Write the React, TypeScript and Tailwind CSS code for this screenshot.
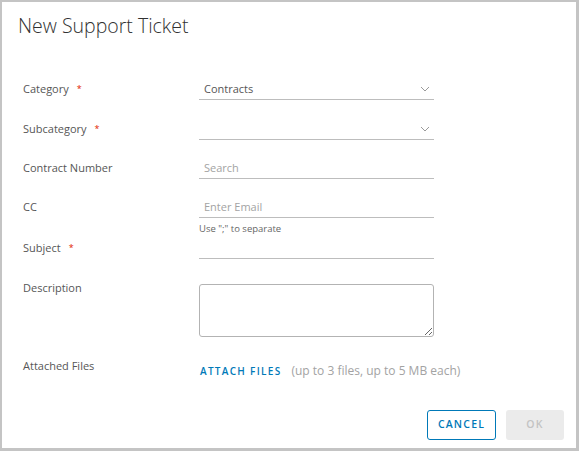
import React from 'react';

const Chevron = () => (
  <svg width="10" height="6" viewBox="0 0 10 6" className="shrink-0 text-[#9a9a9a]">
    <path d="M1 1l4 4 4-4" fill="none" stroke="currentColor" strokeWidth="1" />
  </svg>
);

const Label = ({ text, required }: { text: string; required?: boolean }) => (
  <div className="w-[176px] shrink-0 text-[11px] leading-[20px] text-[#565656]">
    {text}
    {required && <span className="ml-[8px] text-[9px] align-top text-[#e12200]">*</span>}
  </div>
);

export default function App() {
  return (
    <div
      className="w-[579px] h-[451px] bg-white border-l-2 border-t-2 border-r-[3px] border-b-[3px] border-[#c4c4c4] flex flex-col"
      style={{ fontFamily: '"Open Sans", "Liberation Sans", sans-serif' }}
    >
      {/* Header */}
      <h1 className="pt-[10px] pl-[16px] text-[19.5px] leading-[28px] font-light text-[#313131]">
        New Support Ticket
      </h1>

      {/* Form */}
      <div className="pl-[21px] flex flex-col">
        <div className="mt-[39px] flex">
          <Label text="Category" required />
          <div className="w-[235px] h-[21px] border-b border-[#bdbdbd] flex items-center justify-between pl-[5px] pr-[4px]">
            <span className="text-[11px] leading-[20px] text-[#565656]">Contracts</span>
            <Chevron />
          </div>
        </div>

        <div className="mt-[19px] flex">
          <Label text="Subcategory" required />
          <div className="w-[235px] h-[21px] border-b border-[#bdbdbd] flex items-center justify-end pr-[4px]">
            <Chevron />
          </div>
        </div>

        <div className="mt-[18px] flex">
          <Label text="Contract Number" />
          <div className="w-[235px] h-[21px] border-b border-[#bdbdbd] flex items-center pl-[5px]">
            <span className="text-[11px] leading-[20px] text-[#a3a3a3]">Search</span>
          </div>
        </div>

        <div className="mt-[18px] flex">
          <Label text="CC" />
          <div className="flex flex-col">
            <div className="w-[235px] h-[21px] border-b border-[#bdbdbd] flex items-center pl-[5px]">
              <span className="text-[11px] leading-[20px] text-[#a3a3a3]">Enter Email</span>
            </div>
            <div className="mt-[5px] text-[9.5px] leading-[12px] text-[#666666]">Use ";" to separate</div>
          </div>
        </div>

        <div className="mt-[3px] flex">
          <Label text="Subject" required />
          <div className="w-[235px] h-[21px] border-b border-[#bdbdbd]" />
        </div>

        <div className="mt-[19px] flex">
          <Label text="Description" />
          <textarea className="mt-[6px] w-[235px] h-[53px] border border-[#b3b3b3] rounded-[3px] resize outline-none" />
        </div>

        <div className="mt-[19px] flex">
          <Label text="Attached Files" />
          <div className="mt-[5px] flex items-center leading-[20px]">
            <span className="pl-[1px] text-[10px] font-semibold tracking-[1.3px] text-[#0079b8]">ATTACH FILES</span>
            <span className="ml-[10px] text-[12px] text-[#a3a3a3]">(up to 3 files, up to 5 MB each)</span>
          </div>
        </div>
      </div>

      {/* Footer */}
      <div className="mt-[29px] pr-[12px] flex justify-end gap-[10px]">
        <button className="w-[69px] h-[30px] border border-[#0079b8] rounded-[3px] text-[10.5px] font-semibold tracking-[1.2px] text-[#0079b8]">
          CANCEL
        </button>
        <button className="w-[58px] h-[30px] bg-[#ebebeb] rounded-[3px] text-[10.5px] font-semibold tracking-[1.2px] text-[#c3c3c3]">
          OK
        </button>
      </div>
    </div>
  );
}
